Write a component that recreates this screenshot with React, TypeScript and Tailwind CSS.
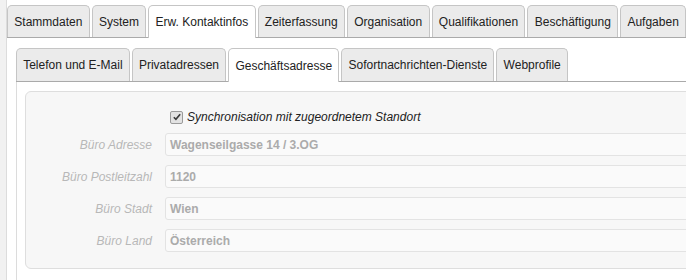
export default function App() {
  const mainTabs = [
    "Stammdaten",
    "System",
    "Erw. Kontaktinfos",
    "Zeiterfassung",
    "Organisation",
    "Qualifikationen",
    "Beschäftigung",
    "Aufgaben",
  ];
  const subTabs = [
    "Telefon und E-Mail",
    "Privatadressen",
    "Geschäftsadresse",
    "Sofortnachrichten-Dienste",
    "Webprofile",
  ];
  const fields = [
    { label: "Büro Adresse", value: "Wagenseilgasse 14 / 3.OG" },
    { label: "Büro Postleitzahl", value: "1120" },
    { label: "Büro Stadt", value: "Wien" },
    { label: "Büro Land", value: "Österreich" },
  ];

  return (
    <div className="flex h-[280px] w-[686px] overflow-hidden bg-white font-['Liberation_Sans',Arial,sans-serif] text-[12px] text-[#222]">
      <div className="w-[7px] shrink-0 border-r border-[#dcdcdc] bg-[#f1f1f1]"></div>

      <div className="flex min-w-0 flex-1 flex-col">
        {/* top level tabs */}
        <div className="flex h-[38px] shrink-0 items-end gap-[2px] border-b border-[#aaa] pt-[5px]">
          {mainTabs.map((tab) => (
            <div
              key={tab}
              className={
                tab === "Erw. Kontaktinfos"
                  ? "-mb-px flex h-[33px] shrink-0 items-center whitespace-nowrap rounded-t-[5px] border border-b-0 border-[#c5c5c5] bg-white px-[6.3px]"
                  : "flex h-[32px] shrink-0 items-center whitespace-nowrap rounded-t-[5px] border border-b-0 border-[#c5c5c5] bg-[#ebebeb] px-[6.3px]"
              }
            >
              {tab}
            </div>
          ))}
          <div className="h-[32px] w-[40px] shrink-0 rounded-t-[5px] border border-b-0 border-[#c5c5c5] bg-[#ebebeb]"></div>
        </div>

        <div className="flex-1 pl-[9px] pt-[10px]">
          {/* second level tabs */}
          <div className="flex h-[34px] items-end gap-[2px] border-b border-[#aaa]">
            {subTabs.map((tab) => (
              <div
                key={tab}
                className={
                  tab === "Geschäftsadresse"
                    ? "-mb-px flex h-[34px] shrink-0 items-center whitespace-nowrap rounded-t-[5px] border border-b-0 border-[#c5c5c5] bg-white px-[6.2px]"
                    : "flex h-[33px] shrink-0 items-center whitespace-nowrap rounded-t-[5px] border border-b-0 border-[#c5c5c5] bg-[#ebebeb] px-[6.2px]"
                }
              >
                {tab}
              </div>
            ))}
          </div>

          <div className="h-[200px] border-l border-[#dcdcdc] pl-[8px] pt-[9px]">
            <div className="-mr-[20px] h-[178px] rounded-[6px] border border-[#dedede] bg-[#f7f7f7] pt-[16px]">
              <div className="flex items-center pl-[144px]">
                <span className="flex h-[13px] w-[13px] items-center justify-center rounded-[2px] border border-[#9a9a9a] bg-[#e2e2e2]">
                  <svg viewBox="0 0 12 12" className="h-[10px] w-[10px]">
                    <path d="M2.2 6.3 L4.7 8.8 L9.8 2.8" fill="none" stroke="#3a3a3a" strokeWidth="2" />
                  </svg>
                </span>
                <span className="ml-[4px] italic">Synchronisation mit zugeordnetem Standort</span>
              </div>

              <div className="mt-[7px] flex flex-col gap-[9px]">
                {fields.map((f) => (
                  <div key={f.label} className="flex items-center">
                    <div className="w-[126px] shrink-0 text-right italic text-[#b8b8b8]">{f.label}</div>
                    <div className="ml-[13px] flex h-[23px] flex-1 items-center rounded-[3px] border border-[#e3e3e3] bg-[#fafafa] pl-[4px] font-bold text-[#ababab]">
                      {f.value}
                    </div>
                  </div>
                ))}
              </div>
            </div>
          </div>
        </div>
      </div>
    </div>
  );
}
